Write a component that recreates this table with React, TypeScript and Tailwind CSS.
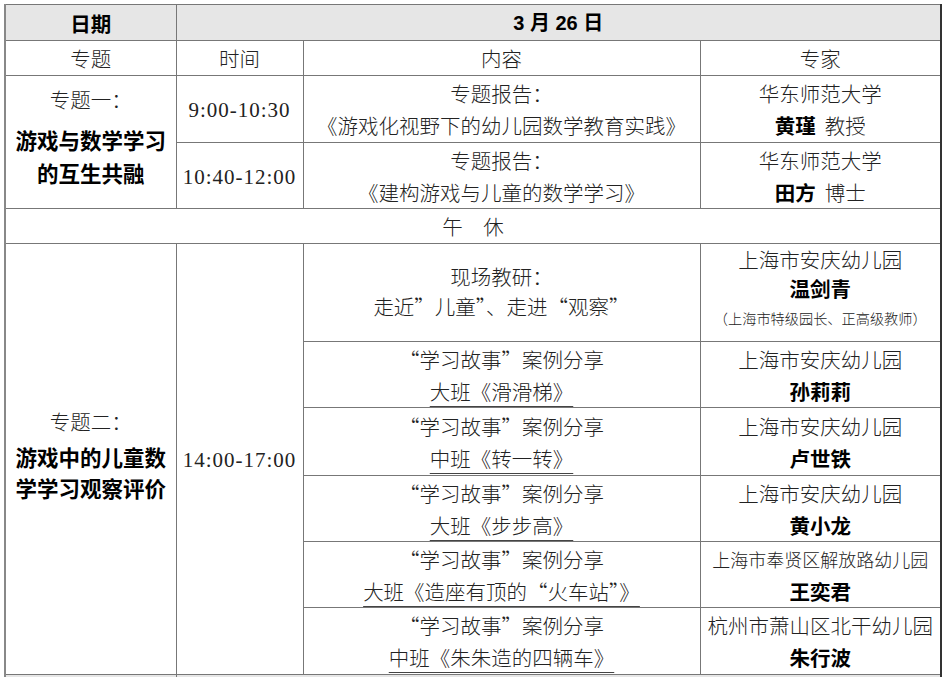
const cjk = "font-['Noto_Sans_CJK_SC',sans-serif]";
const td = "border border-[#777] text-center align-middle p-0";

const stories = [
  { title: "大班《滑滑梯》", org: "上海市安庆幼儿园", name: "孙莉莉", h: "h-[66px]" },
  { title: "中班《转一转》", org: "上海市安庆幼儿园", name: "卢世铁", h: "h-[68px]" },
  { title: "大班《步步高》", org: "上海市安庆幼儿园", name: "黄小龙", h: "h-[66px]" },
  {
    title: "大班《造座有顶的“火车站”》",
    org: "上海市奉贤区解放路幼儿园",
    name: "王奕君",
    h: "h-[66px]",
    small: true,
  },
  { title: "中班《朱朱造的四辆车》", org: "杭州市萧山区北干幼儿园", name: "朱行波", h: "h-[67px]" },
];

function Time({ children }: { children: string }) {
  return (
    <span className="font-['Liberation_Serif',serif] font-normal text-[21px] tracking-[1px] text-[#222]">
      {children}
    </span>
  );
}

export default function App() {
  return (
    <div className={`bg-white w-[944px] h-[677px] overflow-hidden pt-[4px] pl-[4px] ${cjk}`}>
      <table className="table-fixed border-collapse w-[936px] border-r-2 border-r-[#333] text-[20.5px] leading-[32px] text-[#222] font-light">
        <colgroup>
          <col className="w-[171px]" />
          <col className="w-[127px]" />
          <col className="w-[397px]" />
          <col className="w-[241px]" />
        </colgroup>
        <tbody>
          <tr className="h-[36px] bg-[#e6e6e6]">
            <td className={`${td} border-l-2 border-l-[#888] font-bold text-black`}>日期</td>
            <td
              colSpan={3}
              className={`${td} font-bold text-black font-['Liberation_Sans','Noto_Sans_CJK_SC',sans-serif] text-[20px]`}
            >
              3 月 26 日
            </td>
          </tr>
          <tr className="h-[35px]">
            <td className={`${td} border-l-2 border-l-[#888]`}>专题</td>
            <td className={td}>时间</td>
            <td className={td}>内容</td>
            <td className={td}>专家</td>
          </tr>
          <tr className="h-[67px]">
            <td rowSpan={2} className={`${td} border-l-2 border-l-[#888] pb-[13px]`}>
              <div className="mb-[8px]">专题一：</div>
              <div className="font-bold text-black text-[21.5px] leading-[33px]">
                游戏与数学学习
                <br />
                的互生共融
              </div>
            </td>
            <td className={td}>
              <Time>9:00-10:30</Time>
            </td>
            <td className={td}>
              专题报告：
              <br />
              《游戏化视野下的幼儿园数学教育实践》
            </td>
            <td className={td}>
              华东师范大学
              <br />
              <b className="font-bold text-black">黄瑾</b>&nbsp;&nbsp;教授
            </td>
          </tr>
          <tr className="h-[66px]">
            <td className={td}>
              <Time>10:40-12:00</Time>
            </td>
            <td className={td}>
              专题报告：
              <br />
              《建构游戏与儿童的数学学习》
            </td>
            <td className={td}>
              华东师范大学
              <br />
              <b className="font-bold text-black">田方</b>&nbsp;&nbsp;博士
            </td>
          </tr>
          <tr className="h-[35px]">
            <td colSpan={4} className={`${td} border-l-2 border-l-[#888]`}>
              午　休
            </td>
          </tr>
          <tr className="h-[98px]">
            <td rowSpan={6} className={`${td} border-l-2 border-l-[#888] pb-[10px]`}>
              <div className="mb-[4px]">专题二：</div>
              <div className="font-bold text-black text-[21.5px] leading-[31px]">
                游戏中的儿童数
                <br />
                学学习观察评价
              </div>
            </td>
            <td rowSpan={6} className={td}>
              <Time>14:00-17:00</Time>
            </td>
            <td className={`${td} leading-[30px] pb-[4px]`}>
              现场教研：
              <br />
              走近”儿童”、走进“观察”
            </td>
            <td className={`${td} leading-[29px] pb-[8px]`}>
              上海市安庆幼儿园
              <br />
              <b className="font-bold text-black">温剑青</b>
              <div className="text-[14.2px] leading-[30px]">（上海市特级园长、正高级教师）</div>
            </td>
          </tr>
          {stories.map((s) => (
            <tr key={s.name} className={s.h}>
              <td className={td}>
                “学习故事”案例分享
                <br />
                <span className="underline decoration-[#444] decoration-1 underline-offset-[6px]">
                  {s.title}
                </span>
              </td>
              <td className={td}>
                <div className={s.small ? "text-[18px]" : ""}>{s.org}</div>
                <b className="font-bold text-black">{s.name}</b>
              </td>
            </tr>
          ))}
          <tr className="h-[40px] bg-[#e6e6e6]">
            <td className={`${td} border-l-2 border-l-[#888]`}></td>
            <td colSpan={3} className={td}></td>
          </tr>
        </tbody>
      </table>
    </div>
  );
}
